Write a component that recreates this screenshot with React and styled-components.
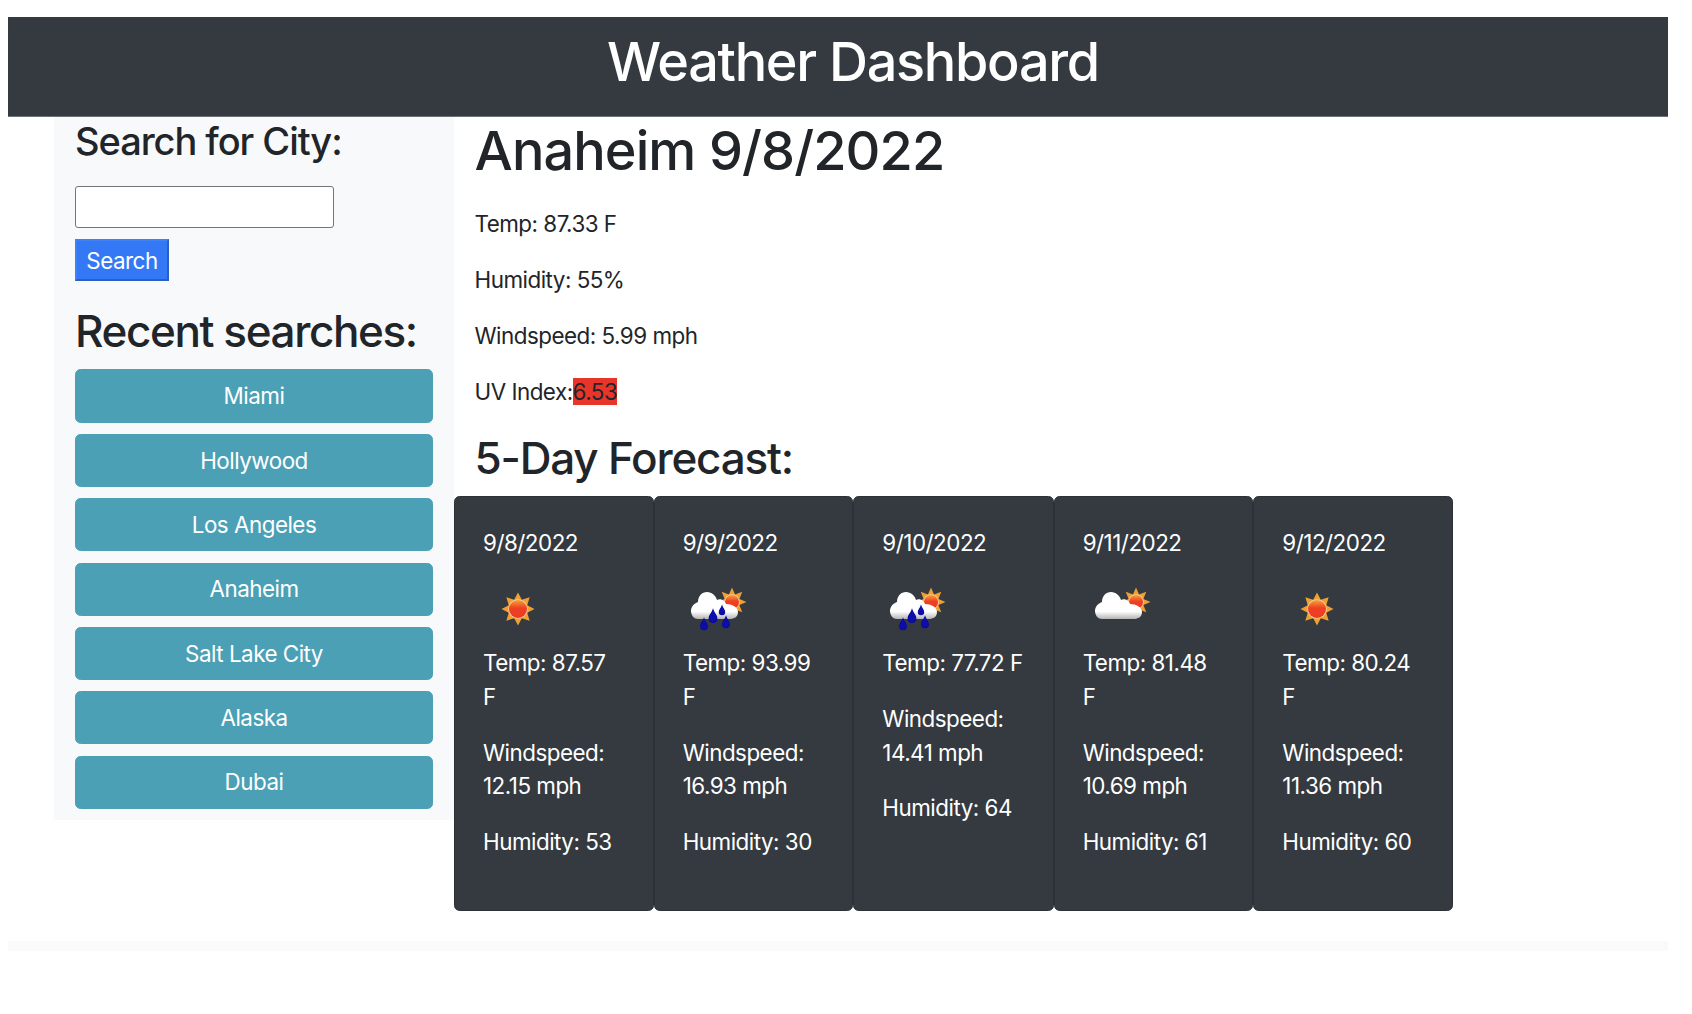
import React from 'react';
import styled, { createGlobalStyle } from 'styled-components';

const GlobalStyle = createGlobalStyle`
  body {
    margin: 8px;
    background: #fff;
    font-family: Inter, "Liberation Sans", sans-serif;
    font-size: 22.4px;
    line-height: 33.6px;
    letter-spacing: -0.5px;
    color: #212529;
  }
  p { margin: 0 0 22.4px; }
`;

const Page = styled.div`
  width: 1660px;
  padding-top: 9px;
`;

const Header = styled.header`
  height: 100px;
  box-sizing: border-box;
  padding: 0 0 9px 30px;
  background: #343a40;
  border-bottom: 1px solid #6c7175;
  color: #fff;
  display: flex;
  align-items: center;
  justify-content: center;
`;

const Title = styled.h1`
  margin: 0;
  font-size: 54px;
  font-weight: 500;
  line-height: 1.2;
  letter-spacing: -1.3px;
`;

const Layout = styled.div`
  display: flex;
  align-items: flex-start;
  padding-left: 46px;
`;

const Sidebar = styled.aside`
  width: 400px;
  box-sizing: border-box;
  flex: none;
  padding: 0 21px 11.2px;
  background: #f8f9fa;
`;

const CityHeading = styled.h3`
  margin: 0 0 21.4px;
  font-size: 38px;
  font-weight: 500;
  line-height: 48px;
  letter-spacing: -1.05px;
`;

const CityInput = styled.input`
  display: block;
  width: 259px;
  height: 42px;
  box-sizing: border-box;
  padding: 0 4px;
  background: #fff;
  border: 1.5px solid #747474;
  border-radius: 3px;
`;

const SearchButton = styled.button`
  display: block;
  width: 94px;
  height: 42px;
  margin: 11px 0 23px;
  padding: 1px 0 0;
  box-sizing: border-box;
  background: #3478f6;
  border: 2px solid;
  border-color: #3f82f8 #2a5fc4 #2a5fc4 #3f82f8;
  color: #fff;
  font: inherit;
  letter-spacing: inherit;
  line-height: 1;
`;

const RecentHeading = styled.h2`
  margin: 0 0 9.2px;
  font-size: 44px;
  font-weight: 500;
  line-height: 55.8px;
  letter-spacing: -1.4px;
`;

const RecentList = styled.div`
  display: flex;
  flex-direction: column;
  gap: 11.2px;
`;

const CityButton = styled.button`
  height: 53.2px;
  padding: 0;
  background: #4ba0b6;
  border: 1px solid #4ba0b6;
  border-radius: 5.6px;
  color: #fff;
  font: inherit;
  letter-spacing: inherit;
`;

const Main = styled.main`
  flex: 1;
`;

const Current = styled.section`
  padding-left: 20.5px;
`;

const CityTitle = styled.h1`
  margin: 0 0 21.4px;
  font-size: 54px;
  font-weight: 500;
  line-height: 68.2px;
  letter-spacing: -0.9px;
`;

const UvValue = styled.span`
  background: #e8352a;
`;

const ForecastHeading = styled.h2`
  margin: 0 0 10px;
  font-size: 44px;
  font-weight: 500;
  line-height: 55.8px;
  letter-spacing: -1.2px;
`;

const CardRow = styled.div`
  display: flex;
  width: 999px;
`;

const Card = styled.article`
  flex: 1 0 0;
  box-sizing: border-box;
  padding: 29px 30px 29px 28px;
  background: #343a40;
  border: 1px solid #2c3136;
  border-radius: 5.6px;
  color: #fff;
`;

const CardDate = styled.p`
  margin-bottom: 14px;
`;

const TempLine = styled.p`
  white-space: ${({ $oneLine }) => ($oneLine ? 'nowrap' : 'normal')};
`;

const IconBox = styled.svg`
  display: block;
  width: 70px;
  height: 72px;
  overflow: visible;
`;

const Footer = styled.footer`
  height: 10px;
  margin-top: 30px;
  background: #fafafa;
`;

const cities = ['Miami', 'Hollywood', 'Los Angeles', 'Anaheim', 'Salt Lake City', 'Alaska', 'Dubai'];

const forecast = [
  { date: '9/8/2022', icon: 'clear', temp: '87.57', wind: '12.15', humidity: 53 },
  { date: '9/9/2022', icon: 'rain', temp: '93.99', wind: '16.93', humidity: 30 },
  { date: '9/10/2022', icon: 'rain', temp: '77.72', wind: '14.41', humidity: 64, oneLine: true },
  { date: '9/11/2022', icon: 'clouds', temp: '81.48', wind: '10.69', humidity: 61 },
  { date: '9/12/2022', icon: 'clear', temp: '80.24', wind: '11.36', humidity: 60 },
];

// 8 pointed star, used for the rays of the sun
const rayPoints = (cx, cy, outer, inner) => {
  const pts = [];
  for (let i = 0; i < 16; i++) {
    const r = i % 2 === 0 ? outer : inner;
    const a = (Math.PI / 8) * i - Math.PI / 2;
    pts.push(`${(cx + r * Math.cos(a)).toFixed(2)},${(cy + r * Math.sin(a)).toFixed(2)}`);
  }
  return pts.join(' ');
};

const Sun = ({ cx, cy, outer, disc, id }) => (
  <g filter="url(#soft)">
    <polygon points={rayPoints(cx, cy, outer, disc + 1)} fill="#f0a033" />
    <circle cx={cx} cy={cy} r={disc + 0.8} fill="#f8cfa0" />
    <circle cx={cx} cy={cy} r={disc} fill={`url(#${id})`} />
  </g>
);

const CLOUD = 'M15 45 C10 45 8 40 8 37 C8 32 12 29 15 28 C15 22 19 18 24 18 C29 18 33 22 34 26 C38 24 42 27 43 30 C49 30 55 33 55 38 C55 43 51 45 47 45 Z';

const Drop = ({ x, y, s = 1 }) => (
  <path
    transform={`translate(${x} ${y}) scale(${s})`}
    d="M0 -7 C1 -3 4 -1 4 2.5 A4 4 0 1 1 -4 2.5 C-4 -1 -1 -3 0 -7 Z"
    fill="#0707a8"
  />
);

const WeatherIcon = ({ kind, uid }) => {
  const sunId = `sun-${uid}`;
  const cloudId = `cloud-${uid}`;
  return (
    <IconBox viewBox="0 0 70 72">
      <defs>
        <linearGradient id={sunId} x1="0" y1="0" x2="0" y2="1">
          <stop offset="0" stopColor="#f5a33a" />
          <stop offset="0.45" stopColor="#ee3f22" />
          <stop offset="1" stopColor="#ec3a20" />
        </linearGradient>
        <linearGradient id={cloudId} x1="0" y1="0" x2="0" y2="1">
          <stop offset="0.72" stopColor="#ffffff" />
          <stop offset="1" stopColor="#b4b4b4" />
        </linearGradient>
        <filter id="soft" x="-20%" y="-20%" width="140%" height="140%">
          <feGaussianBlur stdDeviation="0.5" />
        </filter>
      </defs>
      {kind === 'clear' && <Sun cx={35} cy={35} outer={16.5} disc={9} id={sunId} />}
      {kind === 'rain' && (
        <>
          <Sun cx={49} cy={28} outer={14.5} disc={7} id={sunId} />
          <path d={CLOUD} fill={`url(#${cloudId})`} filter="url(#soft)" />
          <g filter="url(#soft)">
            <Drop x={21} y={50} s={0.95} />
            <Drop x={30} y={42} s={1.1} />
            <Drop x={43} y={48} s={0.95} />
            <Drop x={39} y={36} s={0.8} />
          </g>
        </>
      )}
      {kind === 'clouds' && (
        <>
          <Sun cx={53} cy={28} outer={14.5} disc={7} id={sunId} />
          <path d={CLOUD} transform="translate(4 0)" fill={`url(#${cloudId})`} filter="url(#soft)" />
        </>
      )}
    </IconBox>
  );
};

export default function App() {
  return (
    <Page>
      <GlobalStyle />
      <Header>
        <Title>Weather Dashboard</Title>
      </Header>
      <Layout>
        <Sidebar>
          <CityHeading>Search for City:</CityHeading>
          <CityInput type="text" />
          <SearchButton>Search</SearchButton>
          <RecentHeading>Recent searches:</RecentHeading>
          <RecentList>
            {cities.map((city) => (
              <CityButton key={city}>{city}</CityButton>
            ))}
          </RecentList>
        </Sidebar>
        <Main>
          <Current>
            <CityTitle>Anaheim 9/8/2022</CityTitle>
            <p>Temp: 87.33 F</p>
            <p>Humidity: 55%</p>
            <p>Windspeed: 5.99 mph</p>
            <p>UV Index:<UvValue>6.53</UvValue></p>
            <ForecastHeading>5-Day Forecast:</ForecastHeading>
          </Current>
          <CardRow>
            {forecast.map((day, i) => (
              <Card key={day.date}>
                <CardDate>{day.date}</CardDate>
                <WeatherIcon kind={day.icon} uid={i} />
                <TempLine $oneLine={day.oneLine}>Temp: {day.temp} F</TempLine>
                <p>Windspeed: {day.wind} mph</p>
                <p>Humidity: {day.humidity}</p>
              </Card>
            ))}
          </CardRow>
        </Main>
      </Layout>
      <Footer />
    </Page>
  );
}
